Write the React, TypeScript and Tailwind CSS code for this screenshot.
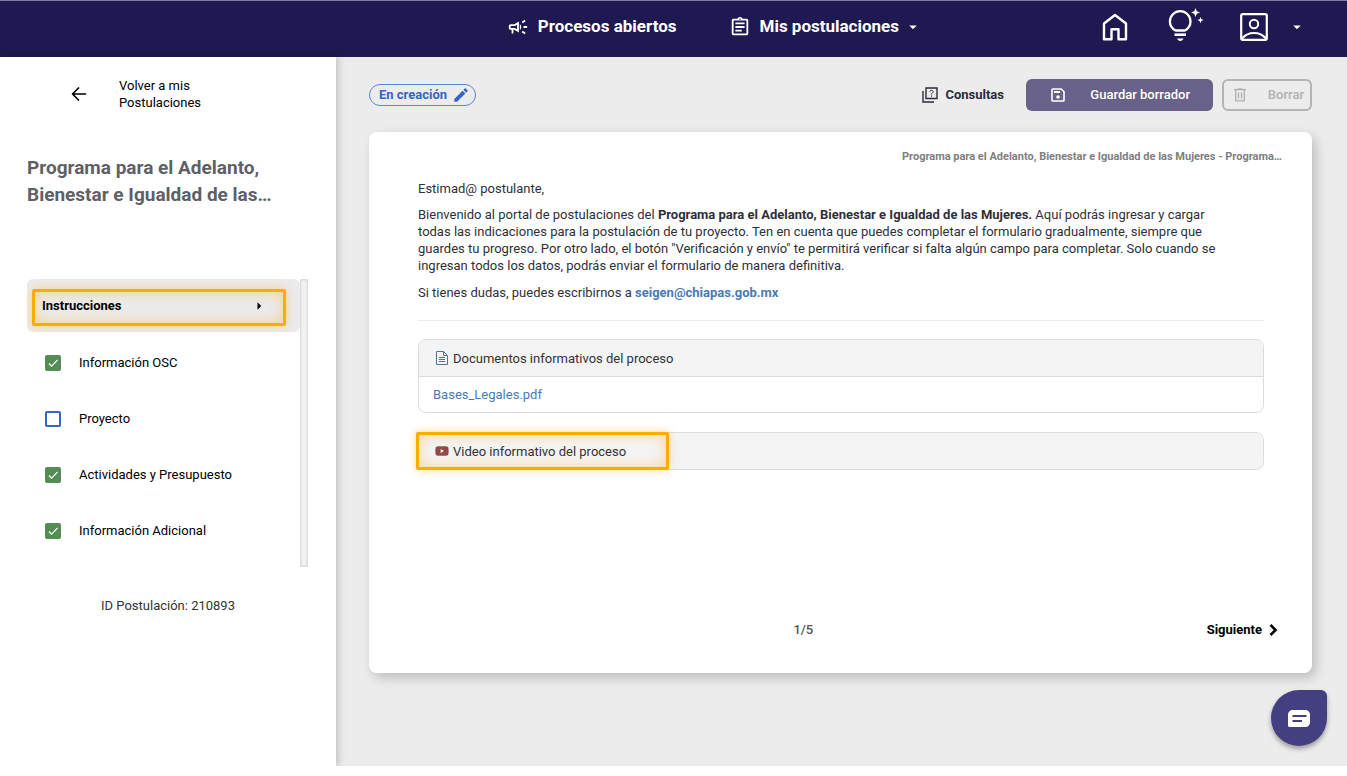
import type { ReactNode } from "react";
import { FaYoutube } from "react-icons/fa";
import { MdArrowDropDown, MdArrowRight, MdEdit, MdOutlineAssignment, MdOutlineCampaign } from "react-icons/md";

const steps = [
  { id: "osc", label: "Información OSC", done: true },
  { id: "proyecto", label: "Proyecto", done: false },
  { id: "actividades", label: "Actividades y Presupuesto", done: true },
  { id: "adicional", label: "Información Adicional", done: true },
];

function HomeIcon() {
  return (
    <svg width="26" height="28" viewBox="0 0 26 28" fill="none" stroke="currentColor" strokeWidth="2.4" strokeLinejoin="round">
      <path d="M2 10.500 13 2l11 8.500V26.300H16.500V16.200H9.500v10.100H2z" />
    </svg>
  );
}

function BulbIcon() {
  return (
    <svg width="36" height="34" viewBox="0 0 36 34" fill="none">
      <path d="M7.500 22.500C4 20.500 1.900 17.200 1.900 13.500a10.300 10.300 0 0 1 20.600 0c0 3.700-2.100 7-5.600 9z" stroke="currentColor" strokeWidth="2.300" strokeLinejoin="round" />
      <path d="M6.500 26.700h11.500" stroke="currentColor" strokeWidth="2.600" />
      <path d="M9 30.500h6.500c-.6 1.600-1.700 2.500-3.250 2.500S9.600 32.100 9 30.500z" fill="currentColor" />
      <path d="M27.500 0l1.300 3.200L32 4.500l-3.200 1.300L27.500 9l-1.300-3.200L23 4.500l3.200-1.300zM32.500 9l.9 2.200 2.200.9-2.200.9-.9 2.200-.9-2.200-2.200-.9 2.200-.9z" fill="currentColor" />
    </svg>
  );
}

function AccountIcon() {
  return (
    <svg width="28" height="28" viewBox="0 0 28 28" fill="none" stroke="currentColor">
      <rect x="1.200" y="1.200" width="25.600" height="25.600" rx="1.500" strokeWidth="2.200" />
      <circle cx="14" cy="11" r="4.200" strokeWidth="2" />
      <path d="M2 25.500c3-3.500 7.200-5.500 12-5.500s9 2 12 5.500" strokeWidth="2.200" />
    </svg>
  );
}

function BackIcon() {
  return (
    <svg width="16" height="16" viewBox="0 0 16 16" fill="none" stroke="currentColor" strokeWidth="1.700" strokeLinecap="round" strokeLinejoin="round">
      <path d="M14.500 8H2M7.500 2 1.500 8l6 6" />
    </svg>
  );
}

function QuestionsIcon() {
  return (
    <svg width="16" height="16" viewBox="0 0 16 16" fill="none" stroke="currentColor" strokeWidth="1.400">
      <path d="M4 1h11v10.500H4zM1 4v11h11" />
      <path d="M7.900 4.800c.1-1 .8-1.500 1.600-1.500.9 0 1.600.6 1.600 1.400 0 1.300-1.600 1.300-1.600 2.800M9.500 8.500v1.200" strokeWidth="1" />
    </svg>
  );
}

function SaveIcon() {
  return (
    <svg width="14" height="14" viewBox="0 0 14 14" fill="none">
      <path d="M1.800 1h8.400L13 3.800v8.400a.8.800 0 0 1-.8.800H1.800a.8.800 0 0 1-.8-.8V1.800A.8.800 0 0 1 1.800 1z" stroke="currentColor" strokeWidth="1.600" />
      <path d="M3 3h6v2H3z" fill="currentColor" />
      <circle cx="7" cy="9" r="1.800" fill="currentColor" />
    </svg>
  );
}

function TrashIcon() {
  return (
    <svg width="12" height="14" viewBox="0 0 12 14" fill="none" stroke="currentColor" strokeWidth="1.300">
      <path d="M0 1.700h12M3.500 1h5M1.700 2v10.800h8.600V2M4.500 4.500v6M7.500 4.500v6" />
    </svg>
  );
}

function DocumentIcon() {
  return (
    <svg width="14" height="14" viewBox="0 0 14 14" fill="none" stroke="#4e7592" strokeWidth="1">
      <path d="M1.500.5H8.500L12.500 4.500V13.500H1.500zM8.500.5v4h4M4 6.500h6M4 8.500h6M4 10.500h6" />
    </svg>
  );
}

function ChatIcon() {
  return (
    <svg width="22" height="17" viewBox="0 0 22 17" fill="none">
      <path d="M5 0h12c3 0 5 2 5 5v7c0 3-2 5-5 5H1.500C.6 17 0 16.400 0 15.500V5c0-3 2-5 5-5z" fill="#fff" />
      <path d="M4.500 6h14M4.500 11h9.500" stroke="#443f80" strokeWidth="1.800" />
    </svg>
  );
}

function Highlight() {
  return (
    <span className="block h-full w-full rounded-xs border-3 border-[#ffab00] shadow-[0_0_9px_rgba(255,171,0,0.45),inset_0_0_14px_rgba(255,171,0,0.4)]" />
  );
}

function PanelHeading({ icon, children }: { icon: ReactNode; children: ReactNode }) {
  return (
    <h2 className="flex h-9 items-center gap-1 bg-[#f4f4f4] px-4 text-[13px] text-[#333]">
      {icon}
      <span>{children}</span>
    </h2>
  );
}

function Header() {
  return (
    <header className="flex h-[57px] items-center justify-end border-t border-[#7d7c9c] bg-[#1f1951] pr-[41px] pb-1 text-white">
      <nav className="mr-[180px] flex items-center text-[17px] font-bold">
        <a href="#procesos" className="flex items-center gap-[9px]">
          <MdOutlineCampaign size={22} />
          Procesos abiertos
        </a>
        <button type="button" className="ml-[52px] flex items-center gap-[9px]">
          <MdOutlineAssignment size={22} />
          Mis postulaciones
          <MdArrowDropDown size={18} className="-ml-1" />
        </button>
      </nav>
      <div className="flex items-center">
        <a href="#inicio" aria-label="Inicio">
          <HomeIcon />
        </a>
        <button type="button" aria-label="Ayuda" className="mb-1 ml-10">
          <BulbIcon />
        </button>
        <button type="button" aria-label="Cuenta" className="ml-9 flex items-center gap-5">
          <AccountIcon />
          <MdArrowDropDown size={18} />
        </button>
      </div>
    </header>
  );
}

function Sidebar() {
  return (
    <aside className="z-10 w-[336px] shrink-0 bg-white px-[27px] shadow-[2px_0_8px_rgba(0,0,0,0.2)]">
      <a href="#postulaciones" className="mt-5 ml-11 flex items-center gap-8 text-[13px] leading-[17px] text-black">
        <BackIcon />
        <span className="w-28">Volver a mis Postulaciones</span>
      </a>
      <h1 className="mt-[43px] h-[54px] text-[19px] leading-[27px] font-bold text-[#5f5f66]">
        Programa para el Adelanto, Bienestar e Igualdad de las…
      </h1>
      <div className="mt-[71px] flex h-72">
        <div className="w-[273px]">
          <div className="relative">
            <button
              type="button"
              className="flex h-[53px] w-full items-center justify-between rounded-md bg-[#ebebeb] pr-8 pl-[15px] text-[13px] font-bold text-black"
            >
              Instrucciones
              <MdArrowRight size={18} />
            </button>
            <div className="pointer-events-none absolute top-[10px] right-[14px] bottom-[6px] left-[5px]">
              <Highlight />
            </div>
          </div>
          <ul>
            {steps.map((s) => (
              <li key={s.id} className="flex h-14 items-center gap-[18px] pt-[5px] pl-[18px]">
                <span className="grid place-items-center">
                  <input
                    id={s.id}
                    type="checkbox"
                    defaultChecked={s.done}
                    className="peer col-start-1 row-start-1 size-4 appearance-none rounded-xs border-2 border-[#3366bf] checked:border-[#538c55] checked:bg-[#538c55]"
                  />
                  <svg
                    viewBox="0 0 16 16"
                    className="pointer-events-none col-start-1 row-start-1 hidden size-4 peer-checked:block"
                    fill="none"
                    stroke="#fff"
                    strokeWidth="1.200"
                  >
                    <path d="m4 8.500 2.700 2.700L12.500 5" />
                  </svg>
                </span>
                <label htmlFor={s.id} className="text-[13px] text-black">
                  {s.label}
                </label>
              </li>
            ))}
          </ul>
        </div>
        <div className="w-2 rounded-xs bg-[#f2f2f2] shadow-[inset_0_0_3px_rgba(0,0,0,0.25)]" />
      </div>
      <p className="mt-[29px] text-center text-[13px] leading-5 text-[#333]">ID Postulación: 210893</p>
    </aside>
  );
}

function Toolbar() {
  return (
    <div className="flex h-8 items-center">
      <span className="flex h-[22px] items-center gap-[5px] rounded-full border border-[#5c85d6] pr-[5px] pl-[9px] text-[13px] font-bold text-[#3366c7]">
        En creación
        <MdEdit size={18} />
      </span>
      <button type="button" className="ml-auto flex items-center gap-[7px] text-[13px] font-bold text-[#2c2b38]">
        <QuestionsIcon />
        Consultas
      </button>
      <button
        type="button"
        className="ml-[22px] flex h-8 w-[187px] items-center justify-between rounded-md bg-[#686189] pr-[23px] pl-[25px] text-[13px] font-medium text-white"
      >
        <SaveIcon />
        Guardar borrador
      </button>
      <button
        type="button"
        className="ml-[9px] flex h-8 w-[90px] items-center justify-between rounded-md border-2 border-[#b3b3b8] pr-[6px] pl-[10px] text-[13px] font-medium text-[#b0b0b5]"
      >
        <TrashIcon />
        Borrar
      </button>
    </div>
  );
}

export default function App() {
  return (
    <div className="flex min-h-[calc(100vh-10px)] flex-col bg-[#ececec] font-['Roboto',sans-serif]">
      <Header />
      <div className="flex flex-1">
        <Sidebar />
        <main className="min-w-0 flex-1 pt-[22px] pr-[35px] pb-8 pl-[33px]">
          <Toolbar />
          <section className="mt-[21px] rounded-lg bg-white shadow-[4px_5px_12px_rgba(0,0,0,0.2)]">
            <p className="pt-[15px] pr-[30px] text-right text-[11px] leading-5 font-bold text-[#808080]">
              Programa para el Adelanto, Bienestar e Igualdad de las Mujeres - Programa…
            </p>
            <div className="pr-12 pl-[49px] text-[13px] leading-[17px] text-[#2f2f38]">
              <p className="mt-[13px]">Estimad@ postulante,</p>
              <p className="mt-[9px]">
                Bienvenido al portal de postulaciones del{" "}
                <strong>Programa para el Adelanto, Bienestar e Igualdad de las Mujeres.</strong> Aquí podrás ingresar y
                cargar
                <br />
                todas las indicaciones para la postulación de tu proyecto. Ten en cuenta que puedes completar el
                formulario gradualmente, siempre que
                <br />
                guardes tu progreso. Por otro lado, el botón "Verificación y envío" te permitirá verificar si falta algún
                campo para completar. Solo cuando se
                <br />
                ingresan todos los datos, podrás enviar el formulario de manera definitiva.
              </p>
              <p className="mt-[10px]">
                Si tienes dudas, puedes escribirnos a{" "}
                <a href="mailto:seigen@chiapas.gob.mx" className="font-bold text-[#4a7ab5]">
                  seigen@chiapas.gob.mx
                </a>
              </p>
              <hr className="mt-[19px] border-[#ebebeb]" />
              <div className="mt-[18px] overflow-hidden rounded-lg border border-[#dcdcdc]">
                <PanelHeading icon={<DocumentIcon />}>Documentos informativos del proceso</PanelHeading>
                <div className="flex h-9 items-center border-t border-[#dcdcdc] px-[14px]">
                  <a href="#bases" className="text-[#4a7ab5]">
                    Bases_Legales.pdf
                  </a>
                </div>
              </div>
              <div className="relative mt-[19px]">
                <div className="overflow-hidden rounded-lg border border-[#dcdcdc]">
                  <PanelHeading icon={<FaYoutube size={14} className="text-[#914a45]" />}>
                    Video informativo del proceso
                  </PanelHeading>
                </div>
                <div className="pointer-events-none absolute inset-y-0 -left-[2px] w-[253px]">
                  <Highlight />
                </div>
              </div>
            </div>
            <div className="mt-[150px] flex items-center pr-[34px] pb-[33px] pl-[31px] text-[13px] leading-5">
              <span className="flex-1 text-center font-medium text-[#555]">1/5</span>
              <button type="button" className="flex items-center gap-[7px] font-bold text-black">
                Siguiente
                <svg width="9" height="12" viewBox="0 0 9 12" fill="none" stroke="currentColor" strokeWidth="2.600">
                  <path d="m1.500 1 5 5-5 5" />
                </svg>
              </button>
            </div>
          </section>
        </main>
      </div>
      <button
        type="button"
        aria-label="Abrir chat"
        className="fixed right-5 bottom-[30px] z-20 grid size-14 place-items-center rounded-[28px] rounded-tr-md bg-[#443f80] shadow-[0_3px_5px_rgba(0,0,0,0.35)]"
      >
        <ChatIcon />
      </button>
    </div>
  );
}
